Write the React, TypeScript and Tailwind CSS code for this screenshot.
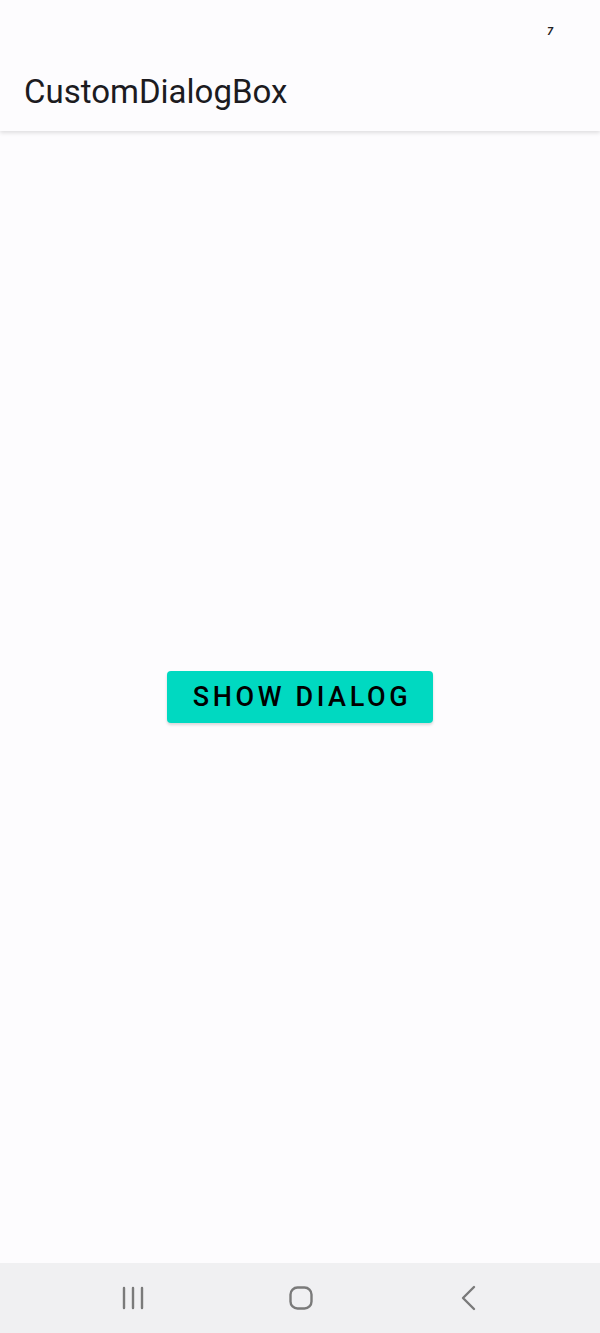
import React from "react";

const App = () => {
  return (
    <div className="w-[600px] h-[1333px] flex flex-col bg-[#fdfcfe] font-['Roboto',sans-serif] overflow-hidden">
      {/* App bar with status area */}
      <header className="h-[131px] flex flex-col bg-[#fdfcfe] shadow-[0_2px_4px_rgba(0,0,0,0.12)] z-10">
        <div className="h-[56px] flex justify-end items-start pr-[47px] pt-[26px]">
          <span className="text-[11px] font-bold italic leading-none text-[#222]">7</span>
        </div>
        <div className="flex-1 flex items-center px-6 pb-[4px]">
          <h1 className="text-[33px] font-normal leading-none text-[#1c1b1f]">CustomDialogBox</h1>
        </div>
      </header>

      {/* Main content */}
      <main className="flex-1 flex items-center justify-center">
        <button className="w-[266px] h-[52px] rounded-[4px] bg-[#00d9c1] text-black text-[27px] font-medium tracking-[3.6px] pl-[4px] shadow-[0_2px_3px_rgba(0,0,0,0.15)]">
          SHOW DIALOG
        </button>
      </main>

      {/* Navigation bar */}
      <nav className="h-[70px] flex items-center gap-[108px] pl-[103px] bg-[#f0f0f2]">
        <div className="w-[60px] flex justify-center">
          <svg width="24" height="24" viewBox="0 0 24 24" className="text-[#7a7a7a]">
            <path d="M3 2v20M12 2v20M21 2v20" stroke="currentColor" strokeWidth="2.4" strokeLinecap="round" />
          </svg>
        </div>
        <div className="w-[60px] flex justify-center">
          <svg width="24" height="24" viewBox="0 0 24 24" className="text-[#7a7a7a]">
            <rect x="1.5" y="1.5" width="21" height="21" rx="7" fill="none" stroke="currentColor" strokeWidth="2.4" />
          </svg>
        </div>
        <div className="w-[60px] flex justify-center">
          <svg width="16" height="26" viewBox="0 0 16 26" className="text-[#7a7a7a]">
            <path d="M13 2L2 13l11 11" fill="none" stroke="currentColor" strokeWidth="2.4" strokeLinecap="round" strokeLinejoin="round" />
          </svg>
        </div>
      </nav>
    </div>
  );
};

export default App;
